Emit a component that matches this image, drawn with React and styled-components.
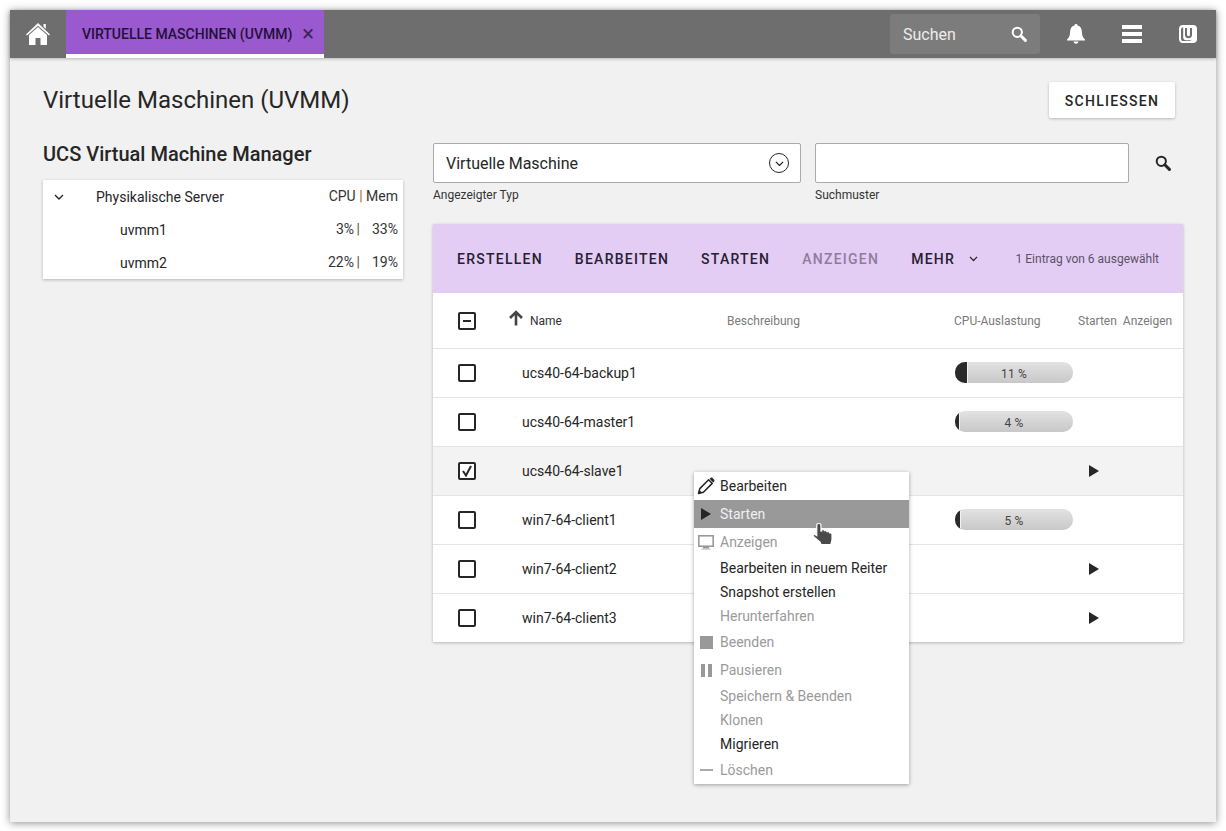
import React from 'react';
import styled, { createGlobalStyle } from 'styled-components';

const GlobalStyle = createGlobalStyle`
  html, body {
    margin: 0;
    padding: 0;
    background: #ffffff;
  }
  body {
    font-family: Roboto, "Liberation Sans", sans-serif;
    color: #262626;
  }
  * {
    box-sizing: border-box;
  }
`;

const vms = [
  { name: 'ucs40-64-backup1', cpu: 11 },
  { name: 'ucs40-64-master1', cpu: 4 },
  { name: 'ucs40-64-slave1', selected: true, play: true },
  { name: 'win7-64-client1', cpu: 5 },
  { name: 'win7-64-client2', play: true },
  { name: 'win7-64-client3', play: true },
];

const HomeIcon = () => (
  <svg width="24" height="22" viewBox="0 0 24 22">
    <path fill="#fff" d="M12 0 L24 11.5 L23 12.5 L12 2.8 L1 12.5 L0 11.5 L12 0 Z M17.5 1 H19.8 V6 L17.5 3.8 Z" />
    <path fill="#fff" d="M12 4 L21 12 V22 H14.5 V15 H9.5 V22 H3 V12 Z" />
  </svg>
);

const SearchIcon = ({ color, size }) => (
  <svg width={size} height={size} viewBox="0 0 16 16">
    <circle cx="6.3" cy="6.3" r="4.6" fill="none" stroke={color} strokeWidth="2" />
    <path d="M9.8 9.8 L14.4 14.4" stroke={color} strokeWidth="3" strokeLinecap="round" />
  </svg>
);

const BellIcon = () => (
  <svg width="18" height="20" viewBox="0 0 18 20">
    <path fill="#fff" d="M9 0 C10 0 10.6 .7 10.6 1.6 C13.6 2.3 14.8 5 14.9 8 C15 11.5 15.8 13.6 18 15.5 V16.6 H0 V15.5 C2.2 13.6 3 11.5 3.1 8 C3.2 5 4.4 2.3 7.4 1.6 C7.4 .7 8 0 9 0 Z M6.6 17.6 H11.4 C11.2 19 10.2 19.8 9 19.8 C7.8 19.8 6.8 19 6.6 17.6 Z" />
  </svg>
);

const LogoIcon = () => (
  <svg width="18" height="18" viewBox="0 0 18 18">
    <rect x="0" y="0" width="18" height="18" rx="4" fill="#fff" />
    <path d="M2 5 C2 3.4 3 2.4 4.2 2.2 V12.5 C4.2 14 5.2 15 6.8 15.2 H12.5 C12.2 15.8 11.6 16 11 16 H4.6 C3 16 2 15 2 13.4 Z" fill="#6e6e6e" />
    <path d="M7 3 V9.8 C7 11.4 8 12.2 9.5 12.2 C11 12.2 12 11.4 12 9.8 V3" fill="none" stroke="#6e6e6e" strokeWidth="2" />
  </svg>
);

const ChevronIcon = ({ color = '#262626', width = 10 }) => (
  <svg width={width} height={width * 0.6} viewBox="0 0 10 6">
    <path d="M1 1 L5 5 L9 1" fill="none" stroke={color} strokeWidth="1.4" />
  </svg>
);

const PlayIcon = ({ color = '#262626' }) => (
  <svg width="10" height="12" viewBox="0 0 10 12">
    <path d="M0 0 L10 6 L0 12 Z" fill={color} />
  </svg>
);

const PencilIcon = () => (
  <svg width="18" height="18" viewBox="0 0 18 18">
    <path d="M1.5 16.5 L2.8 11.6 L11.6 2.8 L15.2 6.4 L6.4 15.2 Z" fill="none" stroke="#262626" strokeWidth="1.5" strokeLinejoin="round" />
    <path d="M12.6 1.8 L13.8 .8 C14.3 .4 14.8 .4 15.3 .8 L17.2 2.7 C17.6 3.2 17.6 3.7 17.2 4.2 L16.2 5.4 Z" fill="#262626" />
    <path d="M1.2 17 L2.4 13 L5 15.6 Z" fill="#262626" />
  </svg>
);

const MonitorIcon = () => (
  <svg width="16" height="15" viewBox="0 0 16 15">
    <rect x=".8" y=".8" width="14.4" height="10.4" fill="none" stroke="#999" strokeWidth="1.6" />
    <rect x="5" y="12" width="6" height="1.6" fill="#999" />
    <rect x="3.5" y="13.4" width="9" height="1.2" fill="#bbb" />
  </svg>
);

const HandCursor = () => (
  <svg width="24" height="24" viewBox="0 0 20 25" preserveAspectRatio="none">
    <path
      d="M6.5 1.5 C7.6 1.5 8.3 2.2 8.3 3.4 V9.5 L9 9.4 V7.9 C10.2 7.4 11 8 11.2 9.2 C12.3 8.7 13.2 9.2 13.4 10.2 C14.5 9.8 15.4 10.3 15.6 11.4 C16.7 11.2 17.5 11.8 17.5 13 V18.5 L16.5 23.5 H8.5 L7.5 20.8 L2 15 C1.3 14 2.2 12.8 3.4 13.2 L4.8 14.3 V3.4 C4.8 2.2 5.5 1.5 6.5 1.5 Z"
      fill="#4a4a4a"
      stroke="#ffffff"
      strokeWidth="1"
    />
  </svg>
);

const Window = styled.div`
  position: relative;
  width: 1206px;
  height: 812px;
  margin: 10px;
  background: #f1f1f1;
  box-shadow: 0 1px 8px rgba(0, 0, 0, 0.45);
  display: flex;
  flex-direction: column;
`;

const Header = styled.header`
  height: 48px;
  background: #6e6e6e;
  display: flex;
  align-items: stretch;
  box-shadow: 0 1px 3px rgba(0, 0, 0, 0.25);
`;

const HomeButton = styled.div`
  width: 56px;
  display: flex;
  align-items: center;
  justify-content: center;
  padding-bottom: 1px;
`;

const Tab = styled.div`
  width: 258px;
  background: #9b59d0;
  border-bottom: 4px solid #ffffff;
  display: flex;
  align-items: center;
  justify-content: space-between;
  padding: 4px 10px 0 16px;
  font-size: 14px;
  font-weight: 500;
  color: #22103a;
`;

const TabClose = styled.span`
  width: 12px;
  font-size: 22px;
  font-weight: 400;
  line-height: 1;
  text-align: center;
  color: #3a2452;
`;

const HeaderRight = styled.div`
  margin-left: auto;
  display: flex;
  align-items: center;
`;

const HeaderSearch = styled.div`
  width: 150px;
  height: 40px;
  margin-right: 8px;
  padding: 0 13px;
  border-radius: 3px;
  background: #7c7c7c;
  color: #ededed;
  font-size: 16px;
  display: flex;
  align-items: center;
  justify-content: space-between;
`;

const HeaderIcon = styled.div`
  width: 56px;
  display: flex;
  justify-content: center;
  align-items: center;
`;

const MenuBars = styled.div`
  width: 20px;
  height: 18px;
  display: flex;
  flex-direction: column;
  justify-content: space-between;

  span {
    height: 4px;
    background: #ffffff;
  }
`;

const Content = styled.main`
  flex: 1;
  padding: 24px 41px 0 33px;
`;

const TitleRow = styled.div`
  height: 36px;
  display: flex;
  align-items: center;
  justify-content: space-between;
`;

const Title = styled.h1`
  margin: 0;
  font-size: 24px;
  font-weight: 400;
  color: #262626;
`;

const CloseButton = styled.button`
  width: 126px;
  height: 36px;
  border: none;
  border-radius: 2px;
  padding: 1px 0 0;
  background: #ffffff;
  box-shadow: 0 1px 3px rgba(0, 0, 0, 0.25);
  font-family: inherit;
  font-size: 14px;
  font-weight: 500;
  letter-spacing: 1.25px;
  color: #262626;
`;

const Columns = styled.div`
  display: grid;
  grid-template-columns: 360px 750px;
  column-gap: 30px;
  margin-top: 25px;
  width: 1140px;
`;

const Subtitle = styled.h2`
  margin: 0 0 15px;
  height: 22px;
  line-height: 22px;
  font-size: 20px;
  font-weight: 500;
  color: #262626;
`;

const TreeCard = styled.div`
  background: #ffffff;
  box-shadow: 0 1px 3px rgba(0, 0, 0, 0.25);
`;

const TreeRow = styled.div`
  height: 33px;
  display: flex;
  align-items: center;
  padding-left: ${(p) => p.$indent}px;
  padding-right: 5px;
  font-size: 14px;
  color: #262626;
`;

const TreeToggle = styled.span`
  width: 53px;
  margin-left: -53px;
  padding-left: 11px;
  display: inline-flex;
  align-items: center;
`;

const TreeName = styled.span`
  flex: 1;
`;

const TreeStats = styled.span`
  margin-bottom: 2px;
  color: #333;
`;

const Divider = styled.span`
  color: ${(p) => (p.$dark ? '#6b4a2a' : '#a86a2c')};
`;

const StatCell = styled.span`
  display: inline-block;
  width: ${(p) => p.$width}px;
  text-align: right;
`;

const SearchForm = styled.div`
  display: flex;
  align-items: flex-start;
  height: 67px;
`;

const Field = styled.div`
  width: ${(p) => p.$width}px;
  margin-right: 14px;
`;

const FieldBox = styled.div`
  height: 40px;
  background: #ffffff;
  border: 1px solid #aaaaaa;
  border-radius: 2px;
  padding: 0 12px;
  display: flex;
  align-items: center;
  justify-content: space-between;
  font-size: 16px;
  color: #262626;
`;

const FieldLabel = styled.div`
  margin-top: 5px;
  font-size: 12px;
  line-height: 14px;
  color: #333;
`;

const RoundChevron = styled.span`
  width: 20px;
  height: 20px;
  margin-right: -1px;
  border: 1.5px solid #262626;
  border-radius: 50%;
  display: flex;
  align-items: center;
  justify-content: center;
  padding-top: 1px;
`;

const FormSearch = styled.div`
  height: 40px;
  margin-left: 12px;
  display: flex;
  align-items: center;
`;

const Grid = styled.section`
  position: relative;
  margin-top: 14px;
  background: #ffffff;
  box-shadow: 0 1px 3px rgba(0, 0, 0, 0.25);
`;

const Toolbar = styled.div`
  height: 69px;
  background: #e3cdf5;
  display: flex;
  align-items: center;
  padding: 0 24px;
`;

const ToolButton = styled.span`
  margin-right: 32px;
  font-size: 14px;
  font-weight: 500;
  letter-spacing: 1.25px;
  color: ${(p) => (p.$disabled ? '#8d7d99' : '#262030')};
  display: inline-flex;
  align-items: center;
`;

const MoreChevron = styled.span`
  margin-left: 14px;
  display: inline-flex;
  padding-top: 1px;
`;

const SelectionInfo = styled.span`
  margin-left: auto;
  font-size: 12px;
  color: #5c5266;
`;

const GridColumns = styled.div`
  display: grid;
  grid-template-columns: 89px 205px 227px 124px 1fr;
  align-items: center;
  border-bottom: 1px solid #e4e4e4;
`;

const HeaderRow = styled(GridColumns)`
  height: 56px;
  font-size: 12px;
  color: #7a7a7a;
`;

const Row = styled(GridColumns)`
  height: 49px;
  font-size: 14px;
  background: ${(p) => (p.$selected ? '#f3f3f3' : '#ffffff')};

  &:last-child {
    height: 48px;
    border-bottom: none;
  }
`;

const CheckCell = styled.div`
  padding-left: 25px;
`;

const Checkbox = styled.span`
  width: 18px;
  height: 18px;
  border: 2px solid #262626;
  border-radius: 2px;
  display: flex;
  align-items: center;
  justify-content: center;
  background: #ffffff;
`;

const Minus = styled.span`
  width: 8px;
  height: 2px;
  background: #262626;
`;

const SortName = styled.div`
  margin-left: -14px;
  display: flex;
  align-items: center;
  color: #333;
`;

const SortArrow = styled.svg`
  margin-right: 6px;
  margin-top: -5px;
`;

const ActionHeads = styled.div`
  display: flex;
  gap: 6px;
`;

const Progress = styled.div`
  position: relative;
  width: 118px;
  height: 21px;
  margin: -1px 0 0 1px;
  border-radius: 10px;
  overflow: hidden;
  background: linear-gradient(#e2e2e2, #c8c8c8);
  font-size: 12px;
  letter-spacing: 0.2px;
  color: #444;
  display: flex;
  align-items: center;
  justify-content: center;
  padding-top: 3px;
`;

const ProgressFill = styled.div`
  position: absolute;
  left: 0;
  top: 0;
  bottom: 0;
  background: #2a2a2a;
  border-right: 1px solid #f2f2f2;
`;

const PlayCell = styled.div`
  padding-left: 11px;
  display: flex;
`;

const ContextMenu = styled.div`
  position: absolute;
  left: 684px;
  top: 462px;
  width: 215px;
  background: #ffffff;
  box-shadow: 0 1px 4px rgba(0, 0, 0, 0.35);
`;

const MenuItem = styled.div`
  height: ${(p) => (p.$tall ? 28 : 24)}px;
  display: grid;
  grid-template-columns: 26px 1fr;
  align-items: center;
  font-size: 14px;
  color: ${(p) => (p.$active ? '#f0f0f0' : p.$disabled ? '#9a9a9a' : '#262626')};
  background: ${(p) => (p.$active ? '#999999' : 'transparent')};
`;

const MenuIcon = styled.span`
  width: 24px;
  display: flex;
  justify-content: center;
`;

const StopSquare = styled.span`
  width: 13px;
  height: 13px;
  background: #999999;
`;

const PauseBars = styled.span`
  width: 11px;
  height: 13px;
  border-left: 4px solid #999999;
  border-right: 4px solid #999999;
`;

const DeleteDash = styled.span`
  width: 13px;
  height: 2px;
  background: #aaaaaa;
`;

const Cursor = styled.div`
  position: absolute;
  left: 801px;
  top: 512px;
  display: flex;
`;

const App = () => (
  <>
    <GlobalStyle />
    <Window>
      <Header>
        <HomeButton><HomeIcon /></HomeButton>
        <Tab>
          VIRTUELLE MASCHINEN (UVMM)
          <TabClose>×</TabClose>
        </Tab>
        <HeaderRight>
          <HeaderSearch>
            Suchen
            <SearchIcon color="#ffffff" size={16} />
          </HeaderSearch>
          <HeaderIcon><BellIcon /></HeaderIcon>
          <HeaderIcon><MenuBars><span /><span /><span /></MenuBars></HeaderIcon>
          <HeaderIcon><LogoIcon /></HeaderIcon>
        </HeaderRight>
      </Header>

      <Content>
        <TitleRow>
          <Title>Virtuelle Maschinen (UVMM)</Title>
          <CloseButton>SCHLIESSEN</CloseButton>
        </TitleRow>

        <Columns>
          <div>
            <Subtitle>UCS Virtual Machine Manager</Subtitle>
            <TreeCard>
              <TreeRow $indent={53}>
                <TreeToggle><ChevronIcon /></TreeToggle>
                <TreeName>Physikalische Server</TreeName>
                <TreeStats>CPU <Divider>|</Divider> Mem</TreeStats>
              </TreeRow>
              <TreeRow $indent={77}>
                <TreeName>uvmm1</TreeName>
                <TreeStats>3%<StatCell $width={6}><Divider $dark>|</Divider></StatCell><StatCell $width={38}>33%</StatCell></TreeStats>
              </TreeRow>
              <TreeRow $indent={77}>
                <TreeName>uvmm2</TreeName>
                <TreeStats>22%<StatCell $width={6}><Divider $dark>|</Divider></StatCell><StatCell $width={38}>19%</StatCell></TreeStats>
              </TreeRow>
            </TreeCard>
          </div>

          <div>
            <SearchForm>
              <Field $width={368}>
                <FieldBox>
                  Virtuelle Maschine
                  <RoundChevron><ChevronIcon width={9} /></RoundChevron>
                </FieldBox>
                <FieldLabel>Angezeigter Typ</FieldLabel>
              </Field>
              <Field $width={314}>
                <FieldBox />
                <FieldLabel>Suchmuster</FieldLabel>
              </Field>
              <FormSearch><SearchIcon color="#262626" size={16} /></FormSearch>
            </SearchForm>

            <Grid>
              <Toolbar>
                <ToolButton>ERSTELLEN</ToolButton>
                <ToolButton>BEARBEITEN</ToolButton>
                <ToolButton>STARTEN</ToolButton>
                <ToolButton $disabled>ANZEIGEN</ToolButton>
                <ToolButton>MEHR<MoreChevron><ChevronIcon width={9} /></MoreChevron></ToolButton>
                <SelectionInfo>1 Eintrag von 6 ausgewählt</SelectionInfo>
              </Toolbar>
              <HeaderRow>
                <CheckCell><Checkbox><Minus /></Checkbox></CheckCell>
                <SortName>
                  <SortArrow width="16" height="16" viewBox="0 0 16 16">
                    <path d="M8 15.5 V2.5 M2 8 L8 2 L14 8" fill="none" stroke="#444" strokeWidth="2.6" />
                  </SortArrow>
                  Name
                </SortName>
                <div>Beschreibung</div>
                <div>CPU-Auslastung</div>
                <ActionHeads><span>Starten</span><span>Anzeigen</span></ActionHeads>
              </HeaderRow>
              {vms.map((vm) => (
                <Row key={vm.name} $selected={vm.selected}>
                  <CheckCell>
                    <Checkbox>
                      {vm.selected && (
                        <svg width="12" height="12" viewBox="0 0 12 12">
                          <path d="M2 6 L5 10.5 L10 1" fill="none" stroke="#262626" strokeWidth="2" />
                        </svg>
                      )}
                    </Checkbox>
                  </CheckCell>
                  <div>{vm.name}</div>
                  <div />
                  <div>
                    {vm.cpu && (
                      <Progress>
                        <ProgressFill style={{ width: `${vm.cpu}%` }} />
                        {vm.cpu} %
                      </Progress>
                    )}
                  </div>
                  <PlayCell>{vm.play && <PlayIcon />}</PlayCell>
                </Row>
              ))}
            </Grid>
          </div>
        </Columns>
      </Content>

      <ContextMenu>
        <MenuItem $tall><MenuIcon><PencilIcon /></MenuIcon>Bearbeiten</MenuItem>
        <MenuItem $tall $active><MenuIcon><PlayIcon /></MenuIcon>Starten</MenuItem>
        <MenuItem $tall $disabled><MenuIcon><MonitorIcon /></MenuIcon>Anzeigen</MenuItem>
        <MenuItem><span />Bearbeiten in neuem Reiter</MenuItem>
        <MenuItem><span />Snapshot erstellen</MenuItem>
        <MenuItem $disabled><span />Herunterfahren</MenuItem>
        <MenuItem $tall $disabled><MenuIcon><StopSquare /></MenuIcon>Beenden</MenuItem>
        <MenuItem $tall $disabled><MenuIcon><PauseBars /></MenuIcon>Pausieren</MenuItem>
        <MenuItem $disabled><span />Speichern &amp; Beenden</MenuItem>
        <MenuItem $disabled><span />Klonen</MenuItem>
        <MenuItem><span />Migrieren</MenuItem>
        <MenuItem $tall $disabled><MenuIcon><DeleteDash /></MenuIcon>Löschen</MenuItem>
      </ContextMenu>
      <Cursor><HandCursor /></Cursor>
    </Window>
  </>
);

export default App;
